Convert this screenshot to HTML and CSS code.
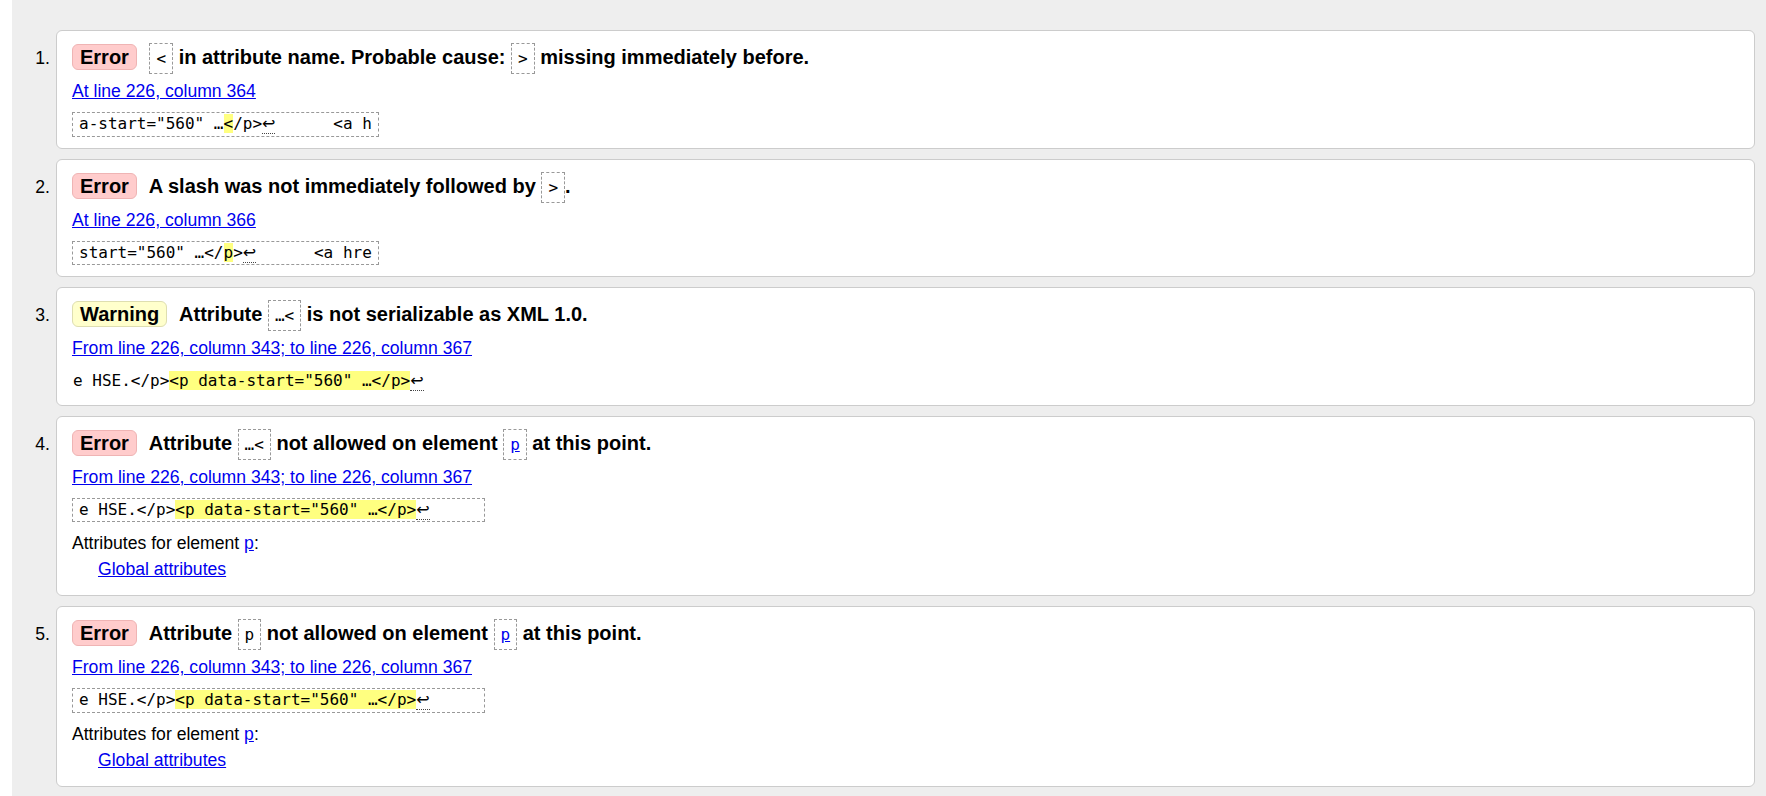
FILE: index.html
```html
<!DOCTYPE html>
<html lang="en">
<head>
<meta charset="utf-8">
<title>Validation results</title>
<link rel="stylesheet" href="styles.css">
</head>
<body>
<div class="wrap">
<ol class="results">
  <li class="item">
    <span class="num">1.</span>
    <div class="card">
      <p class="msg"><span class="badge err">Error</span> <code class="cb">&lt;</code> in attribute name. Probable cause: <code class="cb">&gt;</code> missing immediately before.</p>
      <p class="loc"><a href="#">At line 226, column 364</a></p>
      <div class="extract"><code class="ex">a-start="560" …<mark>&lt;</mark>/p&gt;<span class="lf">↩</span>      &lt;a h</code></div>
    </div>
  </li>
  <li class="item">
    <span class="num">2.</span>
    <div class="card">
      <p class="msg"><span class="badge err">Error</span> A slash was not immediately followed by <code class="cb">&gt;</code>.</p>
      <p class="loc"><a href="#">At line 226, column 366</a></p>
      <div class="extract"><code class="ex">start="560" …&lt;/<mark>p</mark>&gt;<span class="lf">↩</span>      &lt;a hre</code></div>
    </div>
  </li>
  <li class="item">
    <span class="num">3.</span>
    <div class="card">
      <p class="msg"><span class="badge warn">Warning</span> Attribute <code class="cb">…&lt;</code> is not serializable as XML 1.0.</p>
      <p class="loc"><a href="#">From line 226, column 343; to line 226, column 367</a></p>
      <div class="extract"><code class="ex plain">e HSE.&lt;/p&gt;<mark>&lt;p data-start="560" …&lt;/p&gt;</mark><span class="lf">↩</span></code></div>
    </div>
  </li>
  <li class="item">
    <span class="num">4.</span>
    <div class="card">
      <p class="msg"><span class="badge err">Error</span> Attribute <code class="cb">…&lt;</code> not allowed on element <code class="cb"><a href="#">p</a></code> at this point.</p>
      <p class="loc"><a href="#">From line 226, column 343; to line 226, column 367</a></p>
      <div class="extract"><code class="ex">e HSE.&lt;/p&gt;<mark>&lt;p data-start="560" …&lt;/p&gt;</mark><span class="lf">↩</span>     </code></div>
      <dl class="attrs">
        <dt>Attributes for element <a href="#">p</a>:</dt>
        <dd><a href="#">Global attributes</a></dd>
      </dl>
    </div>
  </li>
  <li class="item">
    <span class="num">5.</span>
    <div class="card">
      <p class="msg"><span class="badge err">Error</span> Attribute <code class="cb">p</code> not allowed on element <code class="cb"><a href="#">p</a></code> at this point.</p>
      <p class="loc"><a href="#">From line 226, column 343; to line 226, column 367</a></p>
      <div class="extract"><code class="ex">e HSE.&lt;/p&gt;<mark>&lt;p data-start="560" …&lt;/p&gt;</mark><span class="lf">↩</span>     </code></div>
      <dl class="attrs">
        <dt>Attributes for element <a href="#">p</a>:</dt>
        <dd><a href="#">Global attributes</a></dd>
      </dl>
    </div>
  </li>
</ol>
</div>
</body>
</html>
```

FILE: styles.css
```css
html, body {
  margin: 0;
  padding: 0;
  background: #ffffff;
}

body {
  font-family: "Liberation Sans", Arial, sans-serif;
  font-size: 17.6px;
  color: #000;
}

.wrap {
  margin-left: 12px;
  background: #eeeeee;
  padding: 30px 11px 9px 0;
  min-height: 796px;
  box-sizing: border-box;
}

.results {
  list-style: none;
  margin: 0;
  padding: 0;
}

.item {
  display: flex;
  align-items: baseline;
  margin-bottom: 10px;
}

.num {
  flex: 0 0 38px;
  text-align: right;
  margin-right: 6px;
}

.card {
  flex: 1;
  min-width: 0;
  background: #fff;
  border: 1px solid #cccccc;
  border-radius: 6px;
  padding: 11px 15px 11px;
}

a {
  color: #0000ee;
  text-decoration: underline;
}

.msg {
  margin: 0;
  font-size: 20px;
  font-weight: bold;
  line-height: 30px;
}

.badge {
  display: inline-block;
  line-height: normal;
  padding: 1px 7px 0;
  border: 1px solid;
  border-radius: 6px;
  margin-right: 7px;
}

.badge.err {
  background: #ffcccc;
  border-color: #efb4b4;
}

.badge.warn {
  background: #ffffcc;
  border-color: #dedeb0;
}

code {
  font-family: "DejaVu Sans Mono", "Liberation Mono", monospace;
  font-size: 16px;
  font-weight: normal;
}

.cb {
  line-height: 1;
  border: 1px dashed #999999;
  padding: 5px 6px;
}

.loc {
  margin: 9px 0 0;
  line-height: 20px;
}

.extract {
  display: flex;
  margin-top: 11px;
}

.ex {
  display: block;
  white-space: pre;
  line-height: 18.6px;
  border: 1px dashed #999999;
  padding: 2px 6px;
}

.ex.plain {
  border-color: transparent;
  padding-left: 0;
  padding-right: 0;
}

mark {
  background: #ffff80;
  color: #000;
}

.lf {
  font-family: "DejaVu Sans", sans-serif;
  border-bottom: 1px dotted #444;
}

.attrs {
  margin: 11px 0 5px;
  line-height: 20px;
}

.attrs dt {
  margin: 0;
}

.attrs dd {
  margin: 6px 0 0 26px;
}
```
